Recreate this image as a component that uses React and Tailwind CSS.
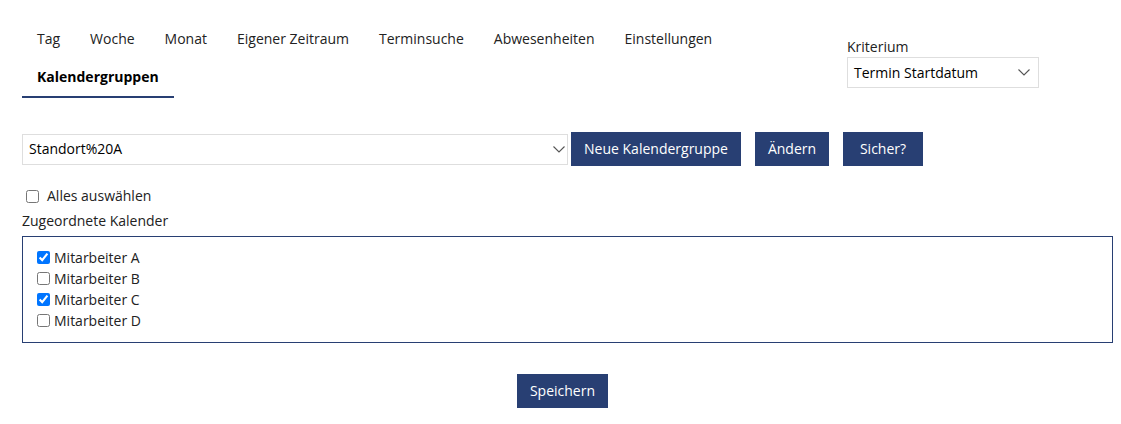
import React from "react";

const Chevron = ({ className = "" }) => (
  <svg width="12" height="7" viewBox="0 0 12 7" className={className} fill="none">
    <path d="M0.5 0.5 L6 6 L11.5 0.5" stroke="#555" strokeWidth="1.1" />
  </svg>
);

const tabs = ["Tag", "Woche", "Monat", "Eigener Zeitraum", "Terminsuche", "Abwesenheiten", "Einstellungen"];

const Btn = ({ children, w }) => (
  <button className={`h-[34px] ${w} flex items-center justify-center bg-[#283f73] text-white text-[14px] leading-[20px]`}>{children}</button>
);

export default function App() {
  const items = [
    ["Mitarbeiter A", true],
    ["Mitarbeiter B", false],
    ["Mitarbeiter C", true],
    ["Mitarbeiter D", false],
  ];
  return (
    <div className="w-[1121px] pl-[22px] pr-[8px] pt-[20px] text-[14px] leading-[20px] text-[#222] bg-white" style={{ fontFamily: '"Open Sans", sans-serif' }}>
      <div className="flex">
        <div className="w-[825px] flex flex-wrap">
          {tabs.map((t) => (
            <div key={t} className="px-[15px] py-[9px]">{t}</div>
          ))}
          <div className="px-[15px] py-[9px] font-bold text-black border-b-2 border-[#283f73]">Kalendergruppen</div>
        </div>
        <div className="pt-[17px]">
          <div>Kriterium</div>
          <div className="w-[192px] h-[31px] border border-[#dedede] flex items-center justify-between pl-[6px] pr-[8px] text-black">
            <span>Termin Startdatum</span>
            <Chevron />
          </div>
        </div>
      </div>

      <div className="flex items-center mt-[34px]">
        <div className="w-[546px] h-[31px] border border-[#dedede] flex items-center justify-between pl-[6px] pr-[2px] text-black">
          <span>Standort%20A</span>
          <Chevron />
        </div>
        <div className="ml-[3px] flex gap-[14px]">
          <Btn w="w-[170px]">Neue Kalendergruppe</Btn>
          <Btn w="w-[74px]">Ändern</Btn>
          <Btn w="w-[80px]">Sicher?</Btn>
        </div>
      </div>

      <label className="flex items-center mt-[20px] h-[20px]">
        <input type="checkbox" className="ml-[4px] mr-[3px] w-[13px] h-[13px]" />
        <span className="ml-[5px]">Alles auswählen</span>
      </label>
      <div className="mt-[5px]">Zugeordnete Kalender</div>
      <div className="mt-[5px] h-[107px] border border-[#283f73] px-[10px] pt-[10px]">
        {items.map(([name, checked]) => (
          <label key={name} className="flex items-center h-[21px]">
            <input type="checkbox" defaultChecked={checked} className="ml-[4px] mr-[4px] w-[13px] h-[13px]" />
            <span>{name}</span>
          </label>
        ))}
      </div>
      <div className="flex mt-[31px] ml-[495px]">
        <Btn w="w-[91px]">Speichern</Btn>
      </div>
    </div>
  );
}
